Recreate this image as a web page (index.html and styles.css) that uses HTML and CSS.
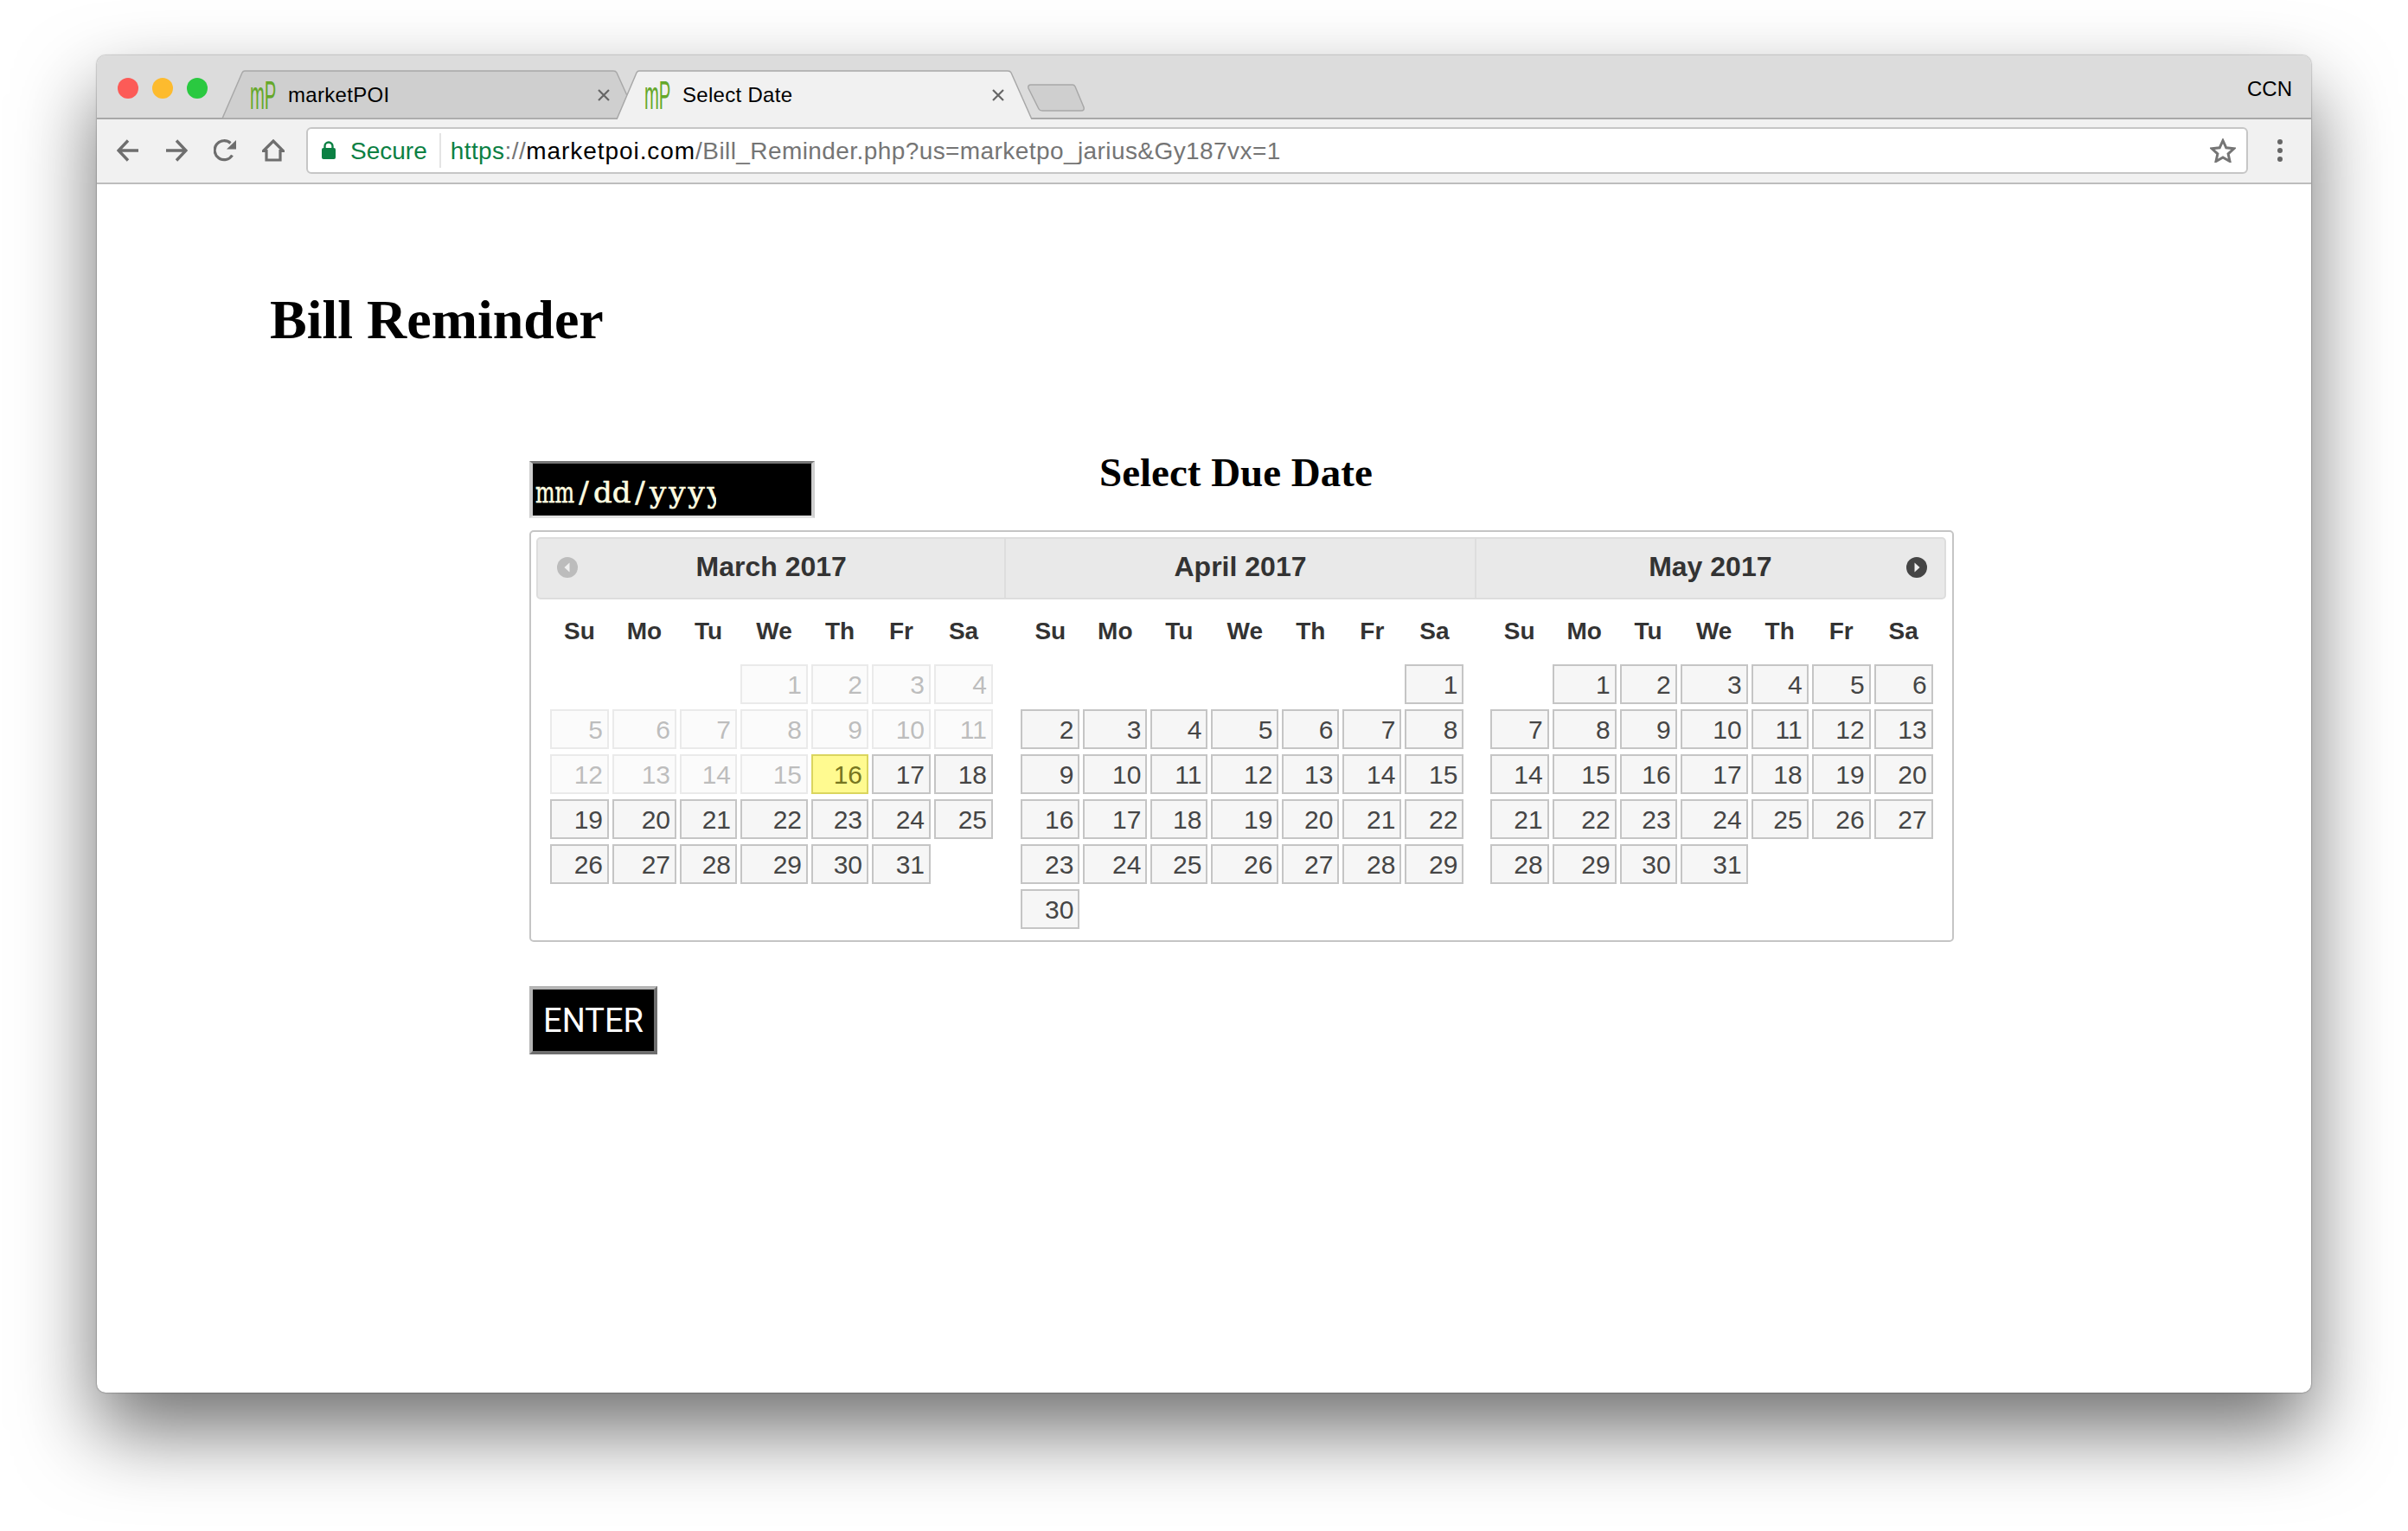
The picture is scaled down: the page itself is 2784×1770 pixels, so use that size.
FILE: index.html
```html
<!DOCTYPE html>
<html lang="en">
<head>
  <meta charset="UTF-8" />
  <title>Select Date</title>
  <link rel="stylesheet" href="styles.css">
</head>
<body>

<div class="window">
  <!-- tab strip -->
  <div class="strip">
    <div class="lights">
      <span class="light red"></span>
      <span class="light yellow"></span>
      <span class="light green"></span>
    </div>
    <div class="tab">
      <svg class="tab-bg" viewBox="0 0 482 57"><path d="M1 56 L24 3 Q25 1 27 1 H453 Q456 1 457 3 L481 56 Z" fill="#cfcfcf" stroke="#a8a8a8" stroke-width="1.5"/></svg>
      <span class="fav"><span class="fav-text">mP</span></span>
      <span class="tab-title">marketPOI</span>
      <svg class="tab-close" viewBox="0 0 14 14"><path d="M1 1 L13 13 M13 1 L1 13" stroke="#666" stroke-width="2.2"/></svg>
    </div>
    <div class="tab tab-active">
      <svg class="tab-bg" viewBox="0 0 482 57"><path d="M1 57 L24 3 Q25 1 27 1 H453 Q456 1 457 3 L481 57" fill="#f1f1f1" stroke="#a8a8a8" stroke-width="1.5"/></svg>
      <span class="fav"><span class="fav-text">mP</span></span>
      <span class="tab-title">Select Date</span>
      <svg class="tab-close" viewBox="0 0 14 14"><path d="M1 1 L13 13 M13 1 L1 13" stroke="#666" stroke-width="2.2"/></svg>
    </div>
    <svg class="new-tab" viewBox="0 0 66 32"><path d="M4 1 H52 Q54 1 55 3 L65 27 Q66 31 62 31 H17 Q14 31 13 29 L1 5 Q0 1 4 1 Z" fill="#cfcfcf" stroke="#a8a8a8" stroke-width="1.5"/></svg>
    <span class="profile">CCN</span>
  </div>

  <!-- toolbar -->
  <div class="toolbar">
    <svg class="tool" viewBox="0 0 26 26"><path d="M25 13 H3 M13 1.500 L2 13 L13 24.500" fill="none" stroke="#6e6e6e" stroke-width="3.4"/></svg>
    <svg class="tool" viewBox="0 0 26 26"><path d="M1 13 H23 M13 1.500 L24 13 L13 24.500" fill="none" stroke="#6e6e6e" stroke-width="3.4"/></svg>
    <svg class="tool" viewBox="0 0 26 26"><path d="M21.500 18.500 A11 11 0 1 1 19.500 4.500" fill="none" stroke="#6e6e6e" stroke-width="3.2"/><path d="M26 1 V11.500 H15 Z" fill="#6e6e6e"/></svg>
    <svg class="tool" viewBox="0 0 26 26"><path d="M1.500 13.500 L13 2 L24.500 13.500 H21 V24 H5 V13.500 Z" fill="none" stroke="#6e6e6e" stroke-width="3.2"/></svg>
    <div class="address">
      <svg class="lock" viewBox="0 0 16 21"><path d="M3.500 9 V6 A4.500 4.500 0 0 1 12.500 6 V9" fill="none" stroke="#0b8043" stroke-width="2.4"/><rect x="0" y="8" width="16" height="13" rx="2" fill="#0b8043"/></svg>
      <span class="secure">Secure</span>
      <span class="divider"></span>
      <span class="url"><span class="url-scheme">https</span>://<span class="url-host">marketpoi.com</span>/Bill_Reminder.php?us=marketpo_jarius&amp;Gy187vx=1</span>
      <svg class="star" viewBox="0 0 30 28"><path d="M15 2.500 L18.800 10.800 L27.800 11.800 L21.100 17.800 L23 26.500 L15 22 L7 26.500 L8.900 17.800 L2.200 11.800 L11.200 10.800 Z" fill="none" stroke="#757575" stroke-width="3"/></svg>
    </div>
    <svg class="dots" viewBox="0 0 6 26"><circle cx="3" cy="3" r="3" fill="#666"/><circle cx="3" cy="13" r="3" fill="#666"/><circle cx="3" cy="23" r="3" fill="#666"/></svg>
  </div>

  <!-- page -->
  <div class="page">
    <h1>Bill Reminder</h1>

    <form class="due-form">
      <div class="due-top">
        <div class="date-input"><span class="date-text"><span class="date-mm">mm</span><span class="date-sep">/</span><span class="date-dd">dd</span><span class="date-sep">/</span><span class="date-yy">yyyy</span></span></div>
        <h2>Select Due Date</h2>
      </div>

      <div class="picker">
        <div class="months">

          <div class="month">
            <div class="month-head month-first">
              <span class="nav nav-prev"><svg viewBox="0 0 24 24"><circle cx="12" cy="12" r="12" fill="#bcbcbc"/><path d="M14.500 6.500 V17.500 L8.500 12 Z" fill="#f0f0f0"/></svg></span>
              <span class="month-title">March 2017</span>
            </div>
            <div class="grid weekdays"><span>Su</span><span>Mo</span><span>Tu</span><span>We</span><span>Th</span><span>Fr</span><span>Sa</span></div>
            <div class="grid days">
              <span></span><span></span><span></span>
              <a class="day dim">1</a><a class="day dim">2</a><a class="day dim">3</a><a class="day dim">4</a>
              <a class="day dim">5</a><a class="day dim">6</a><a class="day dim">7</a><a class="day dim">8</a><a class="day dim">9</a><a class="day dim">10</a><a class="day dim">11</a>
              <a class="day dim">12</a><a class="day dim">13</a><a class="day dim">14</a><a class="day dim">15</a><a class="day today">16</a><a class="day">17</a><a class="day">18</a>
              <a class="day">19</a><a class="day">20</a><a class="day">21</a><a class="day">22</a><a class="day">23</a><a class="day">24</a><a class="day">25</a>
              <a class="day">26</a><a class="day">27</a><a class="day">28</a><a class="day">29</a><a class="day">30</a><a class="day">31</a>
            </div>
          </div>

          <div class="month">
            <div class="month-head">
              <span class="month-title">April 2017</span>
            </div>
            <div class="grid weekdays"><span>Su</span><span>Mo</span><span>Tu</span><span>We</span><span>Th</span><span>Fr</span><span>Sa</span></div>
            <div class="grid days">
              <span></span><span></span><span></span><span></span><span></span><span></span>
              <a class="day">1</a>
              <a class="day">2</a><a class="day">3</a><a class="day">4</a><a class="day">5</a><a class="day">6</a><a class="day">7</a><a class="day">8</a>
              <a class="day">9</a><a class="day">10</a><a class="day">11</a><a class="day">12</a><a class="day">13</a><a class="day">14</a><a class="day">15</a>
              <a class="day">16</a><a class="day">17</a><a class="day">18</a><a class="day">19</a><a class="day">20</a><a class="day">21</a><a class="day">22</a>
              <a class="day">23</a><a class="day">24</a><a class="day">25</a><a class="day">26</a><a class="day">27</a><a class="day">28</a><a class="day">29</a>
              <a class="day">30</a>
            </div>
          </div>

          <div class="month">
            <div class="month-head month-last">
              <span class="month-title">May 2017</span>
              <span class="nav nav-next"><svg viewBox="0 0 24 24"><circle cx="12" cy="12" r="12" fill="#454545"/><path d="M9.500 6.500 V17.500 L15.500 12 Z" fill="#f0f0f0"/></svg></span>
            </div>
            <div class="grid weekdays"><span>Su</span><span>Mo</span><span>Tu</span><span>We</span><span>Th</span><span>Fr</span><span>Sa</span></div>
            <div class="grid days">
              <span></span>
              <a class="day">1</a><a class="day">2</a><a class="day">3</a><a class="day">4</a><a class="day">5</a><a class="day">6</a>
              <a class="day">7</a><a class="day">8</a><a class="day">9</a><a class="day">10</a><a class="day">11</a><a class="day">12</a><a class="day">13</a>
              <a class="day">14</a><a class="day">15</a><a class="day">16</a><a class="day">17</a><a class="day">18</a><a class="day">19</a><a class="day">20</a>
              <a class="day">21</a><a class="day">22</a><a class="day">23</a><a class="day">24</a><a class="day">25</a><a class="day">26</a><a class="day">27</a>
              <a class="day">28</a><a class="day">29</a><a class="day">30</a><a class="day">31</a>
            </div>
          </div>

        </div>
      </div>

      <button type="button" class="enter-btn">ENTER</button>
    </form>
  </div>
</div>

</body>
</html>
```

FILE: styles.css
```css
html, body {
  margin: 0;
  padding: 0;
  background: #fff;
  overflow: hidden;
}

body {
  width: 2784px;
  height: 1770px;
  font-family: "Liberation Sans", Arial, sans-serif;
}

/* Browser window */
.window {
  box-sizing: border-box;
  width: 2560px;
  height: 1546px;
  margin: 64px 0 0 112px;
  background: #fff;
  border-radius: 10px;
  overflow: hidden;
  box-shadow: 0 0 2px rgba(0,0,0,0.55), 0 44px 92px rgba(0,0,0,0.56);
}

/* Tab strip */
.strip {
  box-sizing: border-box;
  display: flex;
  align-items: flex-end;
  height: 74px;
  background: #dcdcdc;
  border-bottom: 2px solid #a8a8a8;
}

.lights {
  display: flex;
  gap: 16px;
  align-self: flex-start;
  margin: 26px 16px 0 24px;
}

.light {
  width: 24px;
  height: 24px;
  border-radius: 50%;
}

.red { background: #fc5b57; }
.yellow { background: #fdbb2e; }
.green { background: #2ac940; }

.tab {
  position: relative;
  display: flex;
  align-items: center;
  box-sizing: border-box;
  width: 482px;
  height: 57px;
  margin-bottom: -2px;
  font-size: 24px;
  letter-spacing: 0.3px;
  color: #000;
}

.tab-active {
  margin-left: -26px;
}

.tab-bg {
  position: absolute;
  left: 0;
  top: 0;
  width: 482px;
  height: 57px;
}

.fav {
  position: relative;
  width: 30px;
  height: 34px;
  margin-left: 33px;
}

.fav-text {
  position: absolute;
  left: 0;
  top: -8px;
  font-size: 46px;
  line-height: 50px;
  letter-spacing: 0;
  color: #65a82b;
  transform: scaleX(0.44);
  transform-origin: left center;
}

.tab-title {
  position: relative;
  margin-left: 14px;
}

.tab-close {
  position: relative;
  width: 14px;
  height: 14px;
  margin-left: auto;
  margin-right: 33px;
}

.new-tab {
  align-self: flex-start;
  width: 66px;
  height: 32px;
  margin: 33px 0 0 -6px;
}

.profile {
  align-self: flex-start;
  margin: 25px 22px 0 auto;
  font-size: 24px;
  line-height: 28px;
  color: #000;
}

/* Toolbar */
.toolbar {
  box-sizing: border-box;
  display: flex;
  align-items: center;
  gap: 30px;
  height: 75px;
  padding: 0 33px 2px 23px;
  background: #f1f1f1;
  border-bottom: 2px solid #bdbdbd;
}

.tool {
  flex: none;
  width: 26px;
  height: 26px;
}

.address {
  box-sizing: border-box;
  display: flex;
  align-items: center;
  flex: 1;
  height: 54px;
  margin: 0 4px 0 -5px;
  padding: 0 12px 0 16px;
  background: #fff;
  border: 2px solid #c6c6c6;
  border-radius: 6px;
  font-size: 28px;
  color: #757575;
  white-space: nowrap;
}

.lock {
  width: 16px;
  height: 21px;
}

.secure {
  margin-left: 17px;
  padding-top: 2px;
  color: #0b8043;
}

.divider {
  width: 2px;
  height: 40px;
  margin: 0 11px 0 14px;
  background: #e4e4e4;
}

.url {
  padding-top: 2px;
  letter-spacing: 0.42px;
}

.url-scheme {
  color: #0b8043;
}

.url-host {
  color: #000;
  letter-spacing: 0.95px;
}

.star {
  width: 30px;
  height: 28px;
  margin-left: auto;
}

.dots {
  flex: none;
  width: 6px;
  height: 26px;
}

/* Page content */
.page {
  padding-left: 200px;
  color: #000;
}

h1 {
  margin: 122px 0 0;
  font-family: "Liberation Serif", "Times New Roman", serif;
  font-size: 64px;
  line-height: 70px;
  font-weight: bold;
}

.due-form {
  margin: 128px 0 0 300px;
}

.due-top {
  display: flex;
}

.date-input {
  box-sizing: border-box;
  width: 330px;
  height: 66px;
  padding: 11px 0 0 3px;
  background: #000;
  border: 4px solid #cfcfcf;
  border-top: 3px solid #777;
  border-bottom: 3px solid #e2e2e2;
}

/* the date field clips its last "y", like the original */
.date-text {
  display: flex;
  width: 209px;
  overflow: hidden;
  font-family: "DejaVu Serif", "Liberation Serif", serif;
  font-size: 34px;
  line-height: 44px;
  color: #fffde0;
  white-space: nowrap;
  -webkit-text-stroke: 0.6px #fffde0;
}

.date-mm {
  flex: none;
  width: 45px;
  transform: scaleX(0.7);
  transform-origin: left center;
}

.date-sep {
  flex: none;
  width: 22px;
  text-align: center;
}

.date-dd {
  flex: none;
  width: 43px;
}

.date-yy {
  flex: none;
  letter-spacing: 3px;
}

h2 {
  margin: -14px 0 0 329px;
  font-family: "Liberation Serif", "Times New Roman", serif;
  font-size: 47px;
  line-height: 54px;
  font-weight: bold;
}

/* Datepicker */
.picker {
  box-sizing: border-box;
  width: 1647px;
  height: 476px;
  margin-top: 14px;
  padding: 6px 7px 0 6px;
  background: #fff;
  border: 2px solid #c5c5c5;
  border-radius: 5px;
  color: #333;
}

.months {
  display: flex;
}

.month {
  flex: 1;
}

.month-head {
  position: relative;
  box-sizing: border-box;
  display: flex;
  align-items: center;
  justify-content: center;
  height: 72px;
  padding-bottom: 4px;
  background: #e9e9e9;
  border: 2px solid #ddd;
  border-left: none;
}

.month-first {
  border-left: 2px solid #ddd;
  border-radius: 5px 0 0 5px;
}

.month-last {
  border-radius: 0 5px 5px 0;
}

.month-title {
  font-size: 32px;
  line-height: 40px;
  font-weight: bold;
}

.nav {
  position: absolute;
  top: 21px;
  width: 24px;
  height: 24px;
}

.nav svg {
  display: block;
  width: 24px;
  height: 24px;
}

.nav-prev { left: 22px; }
.nav-next { right: 20px; }

.grid {
  display: grid;
  grid-template-columns: 68px 74px 66px 78px 66px 68px 68px;
  column-gap: 4px;
  padding-left: 16px;
}

.month:nth-child(2) .grid {
  padding-left: 17px;
}

.weekdays {
  align-items: center;
  box-sizing: border-box;
  height: 75px;
  padding-bottom: 1px;
  font-size: 28px;
  font-weight: bold;
  text-align: center;
}

.days {
  grid-auto-rows: 46px;
  row-gap: 6px;
}

.day {
  box-sizing: border-box;
  padding-right: 5px;
  background: #f6f6f6;
  border: 2px solid #c5c5c5;
  font-size: 30px;
  line-height: 43px;
  text-align: right;
  color: #454545;
}

.dim {
  opacity: 0.35;
}

.today {
  background: #fffa90;
  border-color: #dad55e;
  color: #777620;
}

.enter-btn {
  display: block;
  box-sizing: border-box;
  width: 148px;
  height: 79px;
  margin-top: 51px;
  padding: 0;
  background: #000;
  border: 4px solid;
  border-color: #b5b5b5 #6e6e6e #6e6e6e #b5b5b5;
  font-family: Roboto, sans-serif;
  font-size: 38px;
  color: #fff;
}
```
